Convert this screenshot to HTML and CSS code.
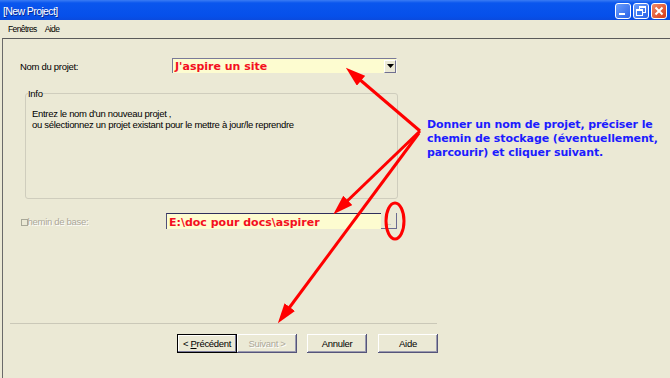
FILE: index.html
```html
<!DOCTYPE html>
<html lang="fr">
<head>
    <meta charset="UTF-8">
    <title>[New Project]</title>
    <link rel="stylesheet" href="styles.css">
</head>
<body>

    <div class="window">
        <div class="titlebar">
            <span class="title">[New Project]</span>
            <div class="caption-buttons">
                <span class="cap-btn min"><span class="min-bar"></span></span>
                <span class="cap-btn restore">
                    <svg width="14" height="14" viewBox="0 0 14 14">
                        <rect x="5.5" y="2.5" width="6" height="6" fill="none" stroke="#fff"/>
                        <rect x="2.5" y="5.5" width="6" height="6" fill="#3a78f0" stroke="#fff"/>
                        <line x1="2.5" y1="6.5" x2="8.5" y2="6.5" stroke="#fff"/>
                        <line x1="5.5" y1="3.5" x2="11.5" y2="3.5" stroke="#fff"/>
                    </svg>
                </span>
                <span class="cap-btn close">
                    <svg width="14" height="14" viewBox="0 0 14 14">
                        <path d="M3.5 3.5 L10.5 10.5 M10.5 3.5 L3.5 10.5" stroke="#fff" stroke-width="2"/>
                    </svg>
                </span>
            </div>
        </div>

        <div class="menubar">
            <span>Fenêtres</span>
            <span>Aide</span>
        </div>

        <div class="client">
            <div class="field-row name-row">
                <label class="field-label name-label">Nom du projet:</label>
                <div class="combo">
                    <span class="value">J'aspire un site</span>
                    <span class="drop-btn">
                        <svg width="7" height="4" viewBox="0 0 7 4"><path d="M0 0 H7 L3.5 4 z" fill="#000"/></svg>
                    </span>
                </div>
            </div>

            <div class="group">
                <span class="group-title">Info</span>
                <p class="group-text">Entrez le nom d'un nouveau projet ,<br>ou sélectionnez un projet existant pour le mettre à jour/le reprendre</p>
            </div>

            <div class="field-row path-row">
                <label class="field-label path-label disabled"><span class="check"></span>Chemin de base:</label>
                <div class="path-input"><span class="value">E:\doc pour docs\aspirer</span></div>
                <span class="browse-btn">...</span>
            </div>

            <div class="separator"></div>

            <div class="buttons">
                <button class="btn default"><u>P</u>récédent</button>
                <button class="btn disabled">Suivant &gt;</button>
                <button class="btn cancel">Annuler</button>
                <button class="btn help">Aide</button>
            </div>
        </div>
    </div>

    <svg class="annotations" width="670" height="378" viewBox="0 0 670 378">
        <defs>
            <marker id="head" viewBox="0 0 20 13" refX="8" refY="6.5" markerWidth="20" markerHeight="13" markerUnits="userSpaceOnUse" orient="auto">
                <path d="M0 0 L20 6.5 L0 13 z" fill="#ff0000"/>
            </marker>
        </defs>
        <g stroke="#ff0000" stroke-width="3" fill="none">
            <line x1="420" y1="131" x2="355" y2="75.5" marker-end="url(#head)"/>
            <line x1="420" y1="131" x2="342" y2="206" marker-end="url(#head)"/>
            <line x1="419" y1="133" x2="285" y2="313.5" marker-end="url(#head)"/>
            <ellipse cx="395" cy="221" rx="9" ry="18"/>
        </g>
    </svg>

    <p class="note">Donner un nom de projet, préciser le<br>chemin de stockage (éventuellement,<br>parcourir) et cliquer suivant.</p>

</body>
</html>
```

FILE: styles.css
```css
body {
    margin: 0;
    width: 670px;
    height: 378px;
    overflow: hidden;
    background-color: #EBE9D5;
    font-family: "Liberation Sans", Arial, sans-serif;
    font-size: 9.5px;
    letter-spacing: -0.3px;
    color: #000;
}
.window {
    display: flex;
    flex-direction: column;
    height: 378px;
}
.titlebar {
    height: 20px;
    display: flex;
    justify-content: space-between;
    align-items: center;
    background: linear-gradient(#3a7cf4 0, #0a56ee 3px, #0650ea 16px, #0a4ade 20px);
    color: white;
}
.title {
    padding-left: 3px;
    padding-top: 2px;
    font-size: 10.5px;
    letter-spacing: -0.6px;
    text-shadow: 1px 1px 0 #0a2a90;
}
.caption-buttons {
    display: flex;
    gap: 2px;
    padding-right: 3px;
    padding-top: 1px;
}
.cap-btn {
    width: 14px;
    height: 14px;
    border: 1px solid #fff;
    border-radius: 3px;
    background: linear-gradient(135deg, #6a9efc, #2a62e8);
    display: flex;
    align-items: center;
    justify-content: center;
}
.cap-btn.close {
    background: linear-gradient(135deg, #f08a68, #d83a18);
}
.cap-btn.min {
    align-items: flex-end;
    justify-content: flex-start;
}
.min-bar {
    width: 6px;
    height: 2px;
    background: #fff;
    margin: 0 0 3px 3px;
}
.menubar {
    height: 18px;
    display: flex;
    align-items: center;
    gap: 8px;
    padding-left: 8px;
    font-size: 8.5px;
    letter-spacing: -0.6px;
}
.client {
    flex: 1;
    margin-left: 2px;
    border-top: 1px solid #5a5a5a;
    border-left: 1px solid #6a6a6a;
    padding-left: 17px;
    display: flex;
    flex-direction: column;
}
.field-row {
    display: flex;
    align-items: center;
}
.name-row {
    margin-top: 19px;
    height: 15px;
}
.name-label {
    width: 152px;
    padding-top: 2px;
}
.combo {
    box-sizing: border-box;
    width: 225px;
    height: 15px;
    background-color: #fdfcd0;
    border-top: 1px solid #7a7a98;
    border-left: 1px solid #7a7a98;
    border-right: 1px solid #f8f8f0;
    display: flex;
    align-items: center;
    justify-content: space-between;
}
.value {
    font-family: "DejaVu Sans", Verdana, sans-serif;
    font-weight: bold;
    font-size: 11px;
    letter-spacing: 0;
    color: #f41020;
    padding-left: 2px;
    line-height: 13px;
}
.drop-btn {
    width: 12px;
    height: 13px;
    box-sizing: border-box;
    background-color: #EBE9D5;
    border-top: 1px solid #fff;
    border-left: 1px solid #fff;
    border-right: 1px solid #707090;
    border-bottom: 1px solid #707090;
    display: flex;
    align-items: center;
    justify-content: center;
}
.group {
    box-sizing: border-box;
    margin-top: 20px;
    margin-left: 5px;
    width: 373px;
    height: 106px;
    border: 1px solid #cfcdbd;
    border-radius: 3px;
}
.group-title {
    display: block;
    width: max-content;
    margin: -6px 0 0 2px;
    background-color: #EBE9D5;
    line-height: 11px;
}
.group-text {
    margin: 9px 0 0 6px;
    line-height: 11px;
}
.path-row {
    margin-top: 14px;
    height: 16px;
}
.path-label {
    width: 146px;
}
.disabled {
    color: #aca899;
    text-shadow: 1px 1px 0 #fff;
}
.check {
    display: inline-block;
    position: relative;
    z-index: 1;
    width: 5px;
    height: 5px;
    margin: 0 -7px 0 1px;
    border: 1px solid #a8a898;
    background-color: #EBE9D5;
    vertical-align: -1px;
}
.path-input {
    box-sizing: border-box;
    width: 215px;
    height: 16px;
    background-color: #fdfcd0;
    border-top: 1px solid #30305c;
    border-left: 1px solid #50507a;
    display: flex;
    align-items: center;
}
.path-input .value {
    padding-top: 1px;
}
.browse-btn {
    box-sizing: border-box;
    width: 16px;
    height: 16px;
    border-right: 1px solid #6a6a90;
    border-bottom: 1px solid #6a6a90;
    color: #9a9a90;
    font-size: 7px;
    display: flex;
    align-items: flex-end;
    justify-content: center;
    padding-bottom: 2px;
}
.separator {
    margin-top: 94px;
    margin-left: -10px;
    width: 427px;
    height: 1px;
    background-color: #cac8b8;
}
.buttons {
    margin-top: 10px;
    margin-left: 157px;
    display: flex;
}
.btn {
    box-sizing: border-box;
    width: 60px;
    height: 19px;
    padding: 0;
    border: none;
    background-color: #EBE9D5;
    font-family: "Liberation Sans", Arial, sans-serif;
    font-size: 9.5px;
    letter-spacing: -0.3px;
    color: #000;
    box-shadow: inset -1px -1px 0 #55557a, inset 1px 1px 0 #fff, inset -2px -2px 0 #9a9ab0;
}
.btn.default {
    border: 1px solid #000;
    box-shadow: inset -1px -1px 0 #7a7a9a, inset 1px 1px 0 #fff;
}
.btn.default::before {
    content: "< ";
}
.btn.disabled {
    color: #aca899;
    text-shadow: 1px 1px 0 #fff;
}
.btn.cancel {
    margin-left: 10px;
}
.btn.help {
    margin-left: 11px;
}
.annotations {
    position: absolute;
    top: 0;
    left: 0;
    pointer-events: none;
}
.note {
    position: absolute;
    left: 427px;
    top: 118px;
    margin: 0;
    font-family: "DejaVu Sans", Verdana, sans-serif;
    font-weight: bold;
    font-size: 11px;
    letter-spacing: -0.1px;
    line-height: 14.2px;
    color: #1c1cff;
}
```
